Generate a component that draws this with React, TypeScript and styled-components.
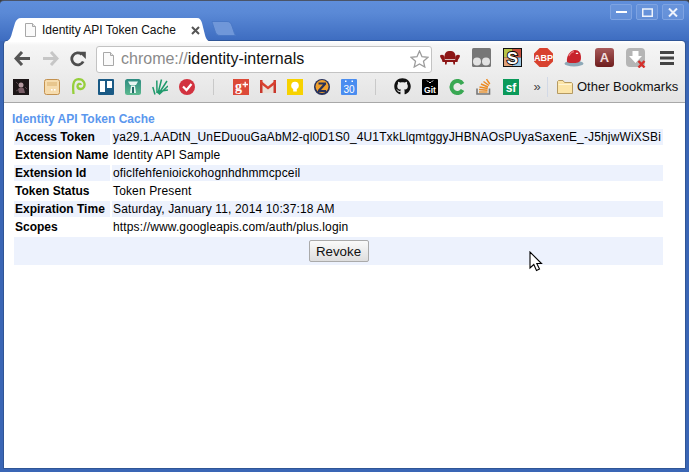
import React from "react";
import styled, { createGlobalStyle } from "styled-components";
import { FaGithub } from "react-icons/fa";

const Global = createGlobalStyle`
  html, body { margin: 0; padding: 0; background: #3c3c3c; }
  body { font-family: "Liberation Sans", Arial, sans-serif; font-size: 12px; color: #000; }
`;

const Frame = styled.div`
  width: 689px; height: 472px; box-sizing: border-box; overflow: hidden; position: relative;
  display: flex; flex-direction: column; padding: 0 4px 4px 4px;
  border-radius: 4px 4px 0 0;
  border-top: 1px solid #4a5468;
  background: linear-gradient(#5f8edb 0, #5a89d6 12px, #3d6cc0 40px, #3a66b5 40px);
`;
const TitleBar = styled.div`
  height: 40px; flex: none; display: flex; align-items: flex-end;
`;
const Tab = styled.div`
  position: relative; width: 208px; height: 24px; margin-bottom: -1px; flex: none;
  display: flex; align-items: center; padding: 0 0 0 21px; box-sizing: border-box; z-index: 1;
`;
const TabShape = styled.svg`
  position: absolute; left: 0; top: 0; width: 208px; height: 24px; z-index: -1;
`;
const TabTitle = styled.span`
  margin-left: 6px; width: 148px; font-size: 12px; white-space: nowrap; color: #111; line-height: 14px;
`;
const TabClose = styled.svg`
  width: 9px; height: 9px; margin-left: 1px; flex: none;
`;
const NewTab = styled.svg`
  width: 26px; height: 15px; margin: 0 0 5px -1px; flex: none;
`;
const WindowControls = styled.div`
  margin-left: auto; align-self: flex-start; margin-top: 3px; margin-right: 1px; display: flex; gap: 4px;
`;
const WinBtn = styled.div`
  width: 20px; height: 14px; border: 1px solid #7ea3e2; border-radius: 2px; box-sizing: content-box;
  background: rgba(115,155,222,.5); display: flex; align-items: center; justify-content: center;
`;
const Browser = styled.div`
  flex: 1; display: flex; flex-direction: column; min-height: 0;
  outline: 1px solid #2f5596;
  border-radius: 3px 3px 0 0; background: #fff;
`;
const Toolbar = styled.div`
  height: 32px; flex: none; box-sizing: border-box; display: flex; align-items: center; padding: 0 0 0 4px;
  background: linear-gradient(#fff 0, #f5f5f5 4px, #ededed 100%);
  border-radius: 3px 3px 0 0;
`;
const NavSlot = styled.div`
  width: 28px; height: 20px; display: flex; align-items: center; justify-content: center; flex: none; margin-top: 3px;
`;
const Omnibox = styled.div`
  width: 336px; height: 27px; margin: 4px 0 0 4px; box-sizing: border-box; flex: none; display: flex; align-items: center;
  background: #fff; border: 1px solid #c3c3c3; border-radius: 3px; padding: 0 2px 0 6px; position: relative;
`;
const Url = styled.div`
  margin-left: 7px; font-size: 16px; white-space: nowrap; color: #111; flex: 1;
`;
const Scheme = styled.span` color: #8a8a8a; `;
const ExtRow = styled.div`
  display: flex; margin-left: 3px; margin-top: 1px;
`;
const ExtSlot = styled.div`
  width: 30.9px; height: 22px; display: flex; align-items: center; justify-content: center;
`;
const BookmarkBar = styled.div`
  height: 30px; flex: none; box-sizing: border-box; display: flex; align-items: center; padding: 0 0 2px 3px;
  background: linear-gradient(#ededed, #e4e4e4); border-bottom: 1px solid #a8a8a8;
`;
const BmSlot = styled.div<{ $gap?: number }>`
  width: 27px; height: 16px; flex: none; display: flex; align-items: center; justify-content: center;
  margin-left: ${p => p.$gap ?? 0}px;
`;
const BmSep = styled.div`
  width: 1px; height: 16px; background: #c9c9c9; flex: none; margin: 0 13px;
`;
const Chevron = styled.div`
  width: 20px; text-align: center; font-size: 13px; color: #444; flex: none; margin-left: 3px; margin-top: -1px;
`;
const BlueSep = styled.div`
  width: 1px; height: 20px; background: #d2d9e6; flex: none; margin: 0 9px 0 0;
`;
const OtherLabel = styled.span`
  font-size: 13px; margin-left: 4px; white-space: nowrap; color: #111;
`;
const Page = styled.div`
  flex: 1; min-height: 0; background: #fff; padding: 9px 0 0 8px;
`;
const Heading = styled.div`
  font-size: 12px; font-weight: bold; color: #5b97ee; line-height: 14px;
`;
const Table = styled.table`
  width: 653px; border-spacing: 2px; border-collapse: separate; margin-top: 1px; table-layout: fixed;
`;
const LabelCell = styled.td<{ $odd: boolean }>`
  width: 94px; padding: 1px; font-weight: bold; font-size: 12px; line-height: 14px; white-space: nowrap;
  background: ${p => (p.$odd ? "#edf2fd" : "#fff")};
`;
const ValueCell = styled.td<{ $odd: boolean }>`
  padding: 1px; font-size: 12px; line-height: 14px; white-space: nowrap; overflow: hidden; letter-spacing: .14px;
  background: ${p => (p.$odd ? "#edf2fd" : "#fff")};
`;
const ActionCell = styled.td`
  background: #edf2fd; text-align: center; padding: 3px 0; height: 22px;
`;
const Revoke = styled.button`
  font: 13.33px "Liberation Sans", Arial, sans-serif; width: 60px; height: 22px; padding: 0; color: #111; display: block; margin: 0 auto;
  border: 1px solid #aaa; border-radius: 2px; background: linear-gradient(#fafafa, #dedede);
`;
const Cursor = styled.svg`
  position: absolute; left: 529px; top: 250px; width: 14px; height: 21px;
`;

const Back = ({ c }: { c: string }) => (
  <svg width="17" height="15" viewBox="0 0 17 15"><path d="M8 1 2 7.5 8 14M2.5 7.5H16" fill="none" stroke={c} strokeWidth="3" /></svg>
);
const Fwd = () => (
  <svg width="17" height="15" viewBox="0 0 17 15"><path d="M9 1 15 7.500 9 14M14.500 7.500H1" fill="none" stroke="#c6c6c6" strokeWidth="3" /></svg>
);
const Reload = () => (
  <svg width="16" height="16" viewBox="0 0 16 16"><path d="M13.2 10.500A6 6 0 1 1 11.800 3.400" fill="none" stroke="#4d4d4d" strokeWidth="2.800" /><path d="M8.500 .8H15.800V8Z" fill="#4d4d4d" /></svg>
);
const PageIcon = () => (
  <svg width="11" height="14" viewBox="0 0 11 14"><path d="M.5.5H7.500L10.500 3.500V13.500H.5Z" fill="#fafafa" stroke="#a8a8a8" /><path d="M7.500.5V3.500H10.500" fill="#e6e6e6" stroke="#a8a8a8" /></svg>
);
const Star = () => (
  <svg width="19" height="18" viewBox="0 0 19 18"><path d="M9.500 1 12 6.700 18 7.300 13.500 11.300 14.800 17 9.500 14 4.200 17 5.500 11.300 1 7.300 7 6.700Z" fill="#fff" stroke="#9c9c9c" strokeWidth="1.300" /></svg>
);
const Sofa = () => (
  <svg width="20" height="14" viewBox="0 0 20 14"><path d="M4.500 6C4.500 1 7 0 10 0s5.500 1 5.500 6v2H4.500Z" fill="#8c1515" /><path d="M0 4.500C2 3 4.500 4 4.800 6.500V8.800H15.200V6.500C15.500 4 18 3 20 4.500 20 7 18 7.500 17.500 11H15L15 13.500H13.500L13 11H7L6.500 13.500H5L5 11H2.500C2 7.500 0 7 0 4.500Z" fill="#8c1515" /></svg>
);
const Dots = () => (
  <svg width="19" height="19" viewBox="0 0 19 19"><rect width="19" height="19" rx="1.500" fill="#777" /><circle cx="5" cy="13.500" r="4" fill="#e3e3e3" /><circle cx="14" cy="13.500" r="4" fill="#e3e3e3" /></svg>
);
const SIcon = () => (
  <svg width="19" height="19" viewBox="0 0 19 19"><rect width="19" height="19" fill="#111" /><rect x="1" y="1" width="8.500" height="8.500" fill="#b7c44a" /><rect x="9.500" y="1" width="8.500" height="8.500" fill="#c64f3c" /><rect x="1" y="9.500" width="8.500" height="8.500" fill="#dfa27a" /><rect x="9.500" y="9.500" width="8.500" height="8.500" fill="#9cc7e2" /><text x="9.500" y="15.500" textAnchor="middle" fontFamily="Liberation Sans" fontWeight="bold" fontSize="17" fill="#fff" stroke="#000" strokeWidth="1.800" paintOrder="stroke">S</text></svg>
);
const Abp = () => (
  <svg width="19" height="19" viewBox="0 0 19 19"><path d="M5.600 0H13.400L19 5.600V13.400L13.400 19H5.600L0 13.400V5.600Z" fill="#d8412e" /><text x="9.500" y="13" textAnchor="middle" fontFamily="Liberation Sans" fontWeight="bold" fontSize="9" fill="#fff">ABP</text></svg>
);
const Helmet = () => (
  <svg width="20" height="18" viewBox="0 0 20 18"><ellipse cx="10" cy="14.500" rx="9.500" ry="3" fill="#8ea9b8" /><path d="M3 13C2 6 7 1 11 1c4 0 6 3 6 8 0 4-3 5-7 5-3 0-6 0-7-1Z" fill="#c8232c" /><path d="M5 7C6 4 8 3 10 2.600" fill="none" stroke="#e8757a" strokeWidth="1.400" /><path d="M11.500 5 13 3.200 14.500 5Z" fill="#fff" /></svg>
);
const AIcon = () => (
  <svg width="19" height="19" viewBox="0 0 19 19"><defs><linearGradient id="ag" x1="0" y1="0" x2="0" y2="1"><stop offset="0" stopColor="#a85a5a" /><stop offset="1" stopColor="#6e1d1d" /></linearGradient></defs><rect width="19" height="19" rx="3" fill="url(#ag)" /><text x="9.500" y="14" textAnchor="middle" fontFamily="Liberation Sans" fontWeight="bold" fontSize="13" fill="#f0dede">A</text></svg>
);
const DlIcon = () => (
  <svg width="20" height="20" viewBox="0 0 20 20"><rect width="19" height="19" rx="4" fill="#b5b5b5" /><path d="M6.500 3H12.500V8H16L9.500 15 3 8H6.500Z" fill="#fff" /><path d="M12.500 13 18.500 19.500M18.500 13 12.500 19.500" stroke="#d5302c" strokeWidth="2.400" /></svg>
);
const Menu = () => (
  <svg width="14" height="14" viewBox="0 0 14 14"><path d="M0 0H14V3H0ZM0 5.500H14V8.500H0ZM0 11H14V14H0Z" fill="#444" /></svg>
);

const Bm = {
  Photo: () => (<svg width="16" height="16" viewBox="0 0 16 16"><rect width="16" height="16" fill="#1d1718" /><circle cx="8" cy="6" r="2.500" fill="#b59aa0" /><path d="M5 10c2-2 5-2 6 0l1 4H6Z" fill="#7a5f68" /><path d="M3 3 5 5M12 8l2 2M3 12l2-1" stroke="#57434a" /></svg>),
  Tan: () => (<svg width="16" height="16" viewBox="0 0 16 16"><rect x=".5" y=".5" width="15" height="15" rx="2" fill="#f6dcae" stroke="#c3914f" /><rect x="3" y="3" width="10" height="4" fill="#e8c68d" /><rect x="7" y="10" width="1.600" height="1.600" fill="#fff" /><rect x="10" y="10" width="1.600" height="1.600" fill="#fff" /></svg>),
  Spiral: () => (<svg width="15" height="17" viewBox="0 0 15 17"><path d="M2.500 16C2 10 .8 1.500 7.500 1.200 13 1.200 14.500 6 13 9 11.500 12 7 11.500 6.500 8.500 6.300 5.500 9.500 5 10 7" fill="none" stroke="#96cf3c" strokeWidth="2.300" /></svg>),
  Trello: () => (<svg width="16" height="16" viewBox="0 0 16 16"><rect width="16" height="16" rx="1" fill="#1a5a85" /><rect x="2" y="2" width="5" height="11" fill="#fff" /><rect x="9" y="2" width="5" height="7" fill="#fff" /></svg>),
  Tower: () => (<svg width="16" height="16" viewBox="0 0 16 16"><defs><linearGradient id="tg" x1="0" y1="0" x2="0" y2="1"><stop offset="0" stopColor="#2c8a80" /><stop offset="1" stopColor="#5cb98f" /></linearGradient></defs><rect width="16" height="16" rx="2.500" fill="url(#tg)" /><path d="M3 2.500H13L11 6H5Z" fill="#e8f5f2" /><path d="M6 6.500H10L11 14H5Z" fill="#e8f5f2" /><rect x="7" y="8" width="2" height="6" fill="#246c68" /></svg>),
  Fan: () => (<svg width="16" height="16" viewBox="0 0 16 16"><path d="M3 15.500.8 8M5 14 4.800 1.500M6 14.500 9.500 .5M6.500 15 15 2M7 15.500 16 7M6 12.500 16 11" stroke="#1f9a6c" strokeWidth="1.500" fill="none" /></svg>),
  Check: () => (<svg width="16" height="16" viewBox="0 0 16 16"><circle cx="8" cy="8" r="8" fill="#d2323f" /><path d="M4 7.500 7.500 11 12.500 5" fill="none" stroke="#fff" strokeWidth="2.200" /></svg>),
  GPlus: () => (<svg width="16" height="16" viewBox="0 0 16 16"><rect width="16" height="16" fill="#dc4a38" /><text x="5.500" y="12" textAnchor="middle" fontFamily="Liberation Serif" fontWeight="bold" fontSize="14" fill="#fff">g</text><path d="M9.500 5.500H15M12.200 2.800V8.200" stroke="#fff" strokeWidth="1.300" /></svg>),
  Gmail: () => (<svg width="16" height="13" viewBox="0 0 16 13"><path d="M0 0 8 6 16 0V13H0Z" fill="#e8e0d8" /><path d="M0 0H2.500V13H0ZM13.500 0H16V13H13.500Z" fill="#c9382c" /><path d="M0 0 8 6.500 16 0V3.200L8 9.500 0 3.200Z" fill="#d8402f" /></svg>),
  Keep: () => (<svg width="16" height="16" viewBox="0 0 16 16"><rect width="16" height="16" fill="#f7d200" /><circle cx="8" cy="6.500" r="3.800" fill="#fff" /><rect x="6.200" y="9" width="3.600" height="3.500" fill="#fff" /></svg>),
  Zed: () => (<svg width="16" height="16" viewBox="0 0 16 16"><circle cx="8" cy="8" r="8" fill="#27315a" /><circle cx="8" cy="7.500" r="6.500" fill="#f0a02c" /><path d="M4.500 3.500H12V5.500L7 11H12V13H4V11L9 5.500H4.500Z" fill="#27315a" /></svg>),
  Cal: () => (<svg width="16" height="16" viewBox="0 0 16 16"><rect width="16" height="16" rx="1" fill="#4a8df0" /><rect x="4" y="1.500" width="1.500" height="1.500" fill="#fff" /><rect x="10.500" y="1.500" width="1.500" height="1.500" fill="#fff" /><text x="8" y="13.500" textAnchor="middle" fontFamily="Liberation Sans" fontSize="10" fill="#fff">30</text></svg>),
  Git: () => (<svg width="16" height="16" viewBox="0 0 16 16"><rect width="16" height="16" rx="1" fill="#000" /><path d="M5 1.500 6.500 3M11 1.500 9.500 3M7 3.500H9" stroke="#fff" strokeWidth=".9" /><text x="8" y="13.500" textAnchor="middle" fontFamily="Liberation Sans" fontWeight="bold" fontSize="8.500" fill="#fff">Git</text></svg>),
  C: () => (<svg width="16" height="16" viewBox="0 0 16 16"><path d="M13.600 11A6 6 0 1 1 13.600 5" fill="none" stroke="#39a853" strokeWidth="4" /></svg>),
  Stack: () => (<svg width="15" height="17" viewBox="0 0 15 17"><path d="M1 10.500V16H13.500V10.500" fill="none" stroke="#777" strokeWidth="1.600" /><path d="M3 14H11.500" stroke="#e8983c" strokeWidth="1.600" /><path d="M3 11.500 11.500 12.300M3.500 9 11.700 10.500M5 6 12 9M7.500 3.500 13 7.500M10.500 1.200 13.800 6" stroke="#ec8a22" strokeWidth="1.500" /></svg>),
  Sf: () => (<svg width="16" height="16" viewBox="0 0 16 16"><rect width="16" height="16" fill="#0a9a5a" /><text x="8" y="13" textAnchor="middle" fontFamily="Liberation Sans" fontWeight="bold" fontSize="12" fill="#fff">sf</text></svg>),
  Folder: () => (<svg width="16" height="14" viewBox="0 0 16 14"><path d="M.5 13.500V1.500L1.500.5H6L7.500 2.500H14.500L15.500 3.500V13.500Z" fill="#fce5a8" stroke="#b59a62" /><rect x="1.500" y="4" width="13" height="1" fill="#fff5d5" /></svg>)
};

const rows: [string, string][] = [
  ["Access Token", "ya29.1.AADtN_UnEDuouGaAbM2-ql0D1S0_4U1TxkLlqmtggyJHBNAOsPUyaSaxenE_-J5hjwWiXSBi"],
  ["Extension Name", "Identity API Sample"],
  ["Extension Id", "oficlfehfenioickohognhdhmmcpceil"],
  ["Token Status", "Token Present"],
  ["Expiration Time", "Saturday, January 11, 2014 10:37:18 AM"],
  ["Scopes", "https://www.googleapis.com/auth/plus.login"]
];

const exts = [Sofa, Dots, SIcon, Abp, Helmet, AIcon, DlIcon, Menu];
const bmA = [Bm.Tan, Bm.Spiral, Bm.Trello, Bm.Tower, Bm.Fan, Bm.Check];
const bmB = [Bm.GPlus, Bm.Gmail, Bm.Keep, Bm.Zed, Bm.Cal];
const bmC = [() => <FaGithub size={17} color="#111" />, Bm.Git, Bm.C, Bm.Stack, Bm.Sf];

export default function App() {
  return (
    <Frame>
      <Global />
      <TitleBar>
        <Tab>
          <TabShape viewBox="0 0 208 24">
            <path d="M0 24C6 23 7 19 8 15L11 5C12 2 14 0 17 0H193C196 0 197 2 198 5L201 17C202 21 204 24 208 24Z" fill="#fff" />
          </TabShape>
          <PageIcon />
          <TabTitle>Identity API Token Cache</TabTitle>
          <TabClose viewBox="0 0 9 9"><path d="M1 1 8 8M8 1 1 8" stroke="#555" strokeWidth="2" /></TabClose>
        </Tab>
        <NewTab viewBox="0 0 26 15">
          <path d="M1 .5H16C19 .5 20 2 21 5L23 11C23.500 13 24 14 25 14.500H9C6 14.500 5 13 4 10L2 4C1.500 2 1 1 1 .5Z" fill="#7097d9" stroke="#4a78c6" />
        </NewTab>
        <WindowControls>
          <WinBtn><svg width="11" height="2" viewBox="0 0 11 2"><rect width="11" height="2" fill="#fff" /></svg></WinBtn>
          <WinBtn><svg width="11" height="9" viewBox="0 0 11 9"><rect x=".75" y="1" width="9.500" height="7.250" fill="none" stroke="#eef3fc" strokeWidth="1.500" /></svg></WinBtn>
          <WinBtn><svg width="10" height="9" viewBox="0 0 10 9"><path d="M1 .5 9 8.500M9 .5 1 8.500" stroke="#eef3fc" strokeWidth="2" /></svg></WinBtn>
        </WindowControls>
      </TitleBar>
      <Browser>
        <Toolbar>
          <NavSlot><Back c="#555" /></NavSlot>
          <NavSlot><Fwd /></NavSlot>
          <NavSlot><Reload /></NavSlot>
          <Omnibox>
            <PageIcon />
            <Url><Scheme>chrome://</Scheme>identity-internals</Url>
            <Star />
          </Omnibox>
          <ExtRow>
            {exts.map((E, i) => <ExtSlot key={i}><E /></ExtSlot>)}
          </ExtRow>
        </Toolbar>
        <BookmarkBar>
          <BmSlot><Bm.Photo /></BmSlot>
          {bmA.map((E, i) => <BmSlot key={i} $gap={i === 0 ? 4 : 0}><E /></BmSlot>)}
          <BmSep />
          {bmB.map((E, i) => <BmSlot key={i}><E /></BmSlot>)}
          <BmSep />
          {bmC.map((E, i) => <BmSlot key={i}><E /></BmSlot>)}
          <Chevron>»</Chevron>
          <BlueSep />
          <Bm.Folder />
          <OtherLabel>Other Bookmarks</OtherLabel>
        </BookmarkBar>
        <Page>
          <Heading>Identity API Token Cache</Heading>
          <Table>
            <tbody>
              {rows.map(([k, v], i) => (
                <tr key={k}>
                  <LabelCell $odd={i % 2 === 0}>{k}</LabelCell>
                  <ValueCell $odd={i % 2 === 0}>{v}</ValueCell>
                </tr>
              ))}
              <tr>
                <ActionCell colSpan={2}><Revoke>Revoke</Revoke></ActionCell>
              </tr>
            </tbody>
          </Table>
        </Page>
      </Browser>
      <Cursor viewBox="0 0 14 21"><path d="M1 1V17L4.800 13.500 7.500 19.500 10.500 18 7.800 12.500H12.500Z" fill="#fff" stroke="#000" strokeWidth="1.100" /></Cursor>
    </Frame>
  );
}
